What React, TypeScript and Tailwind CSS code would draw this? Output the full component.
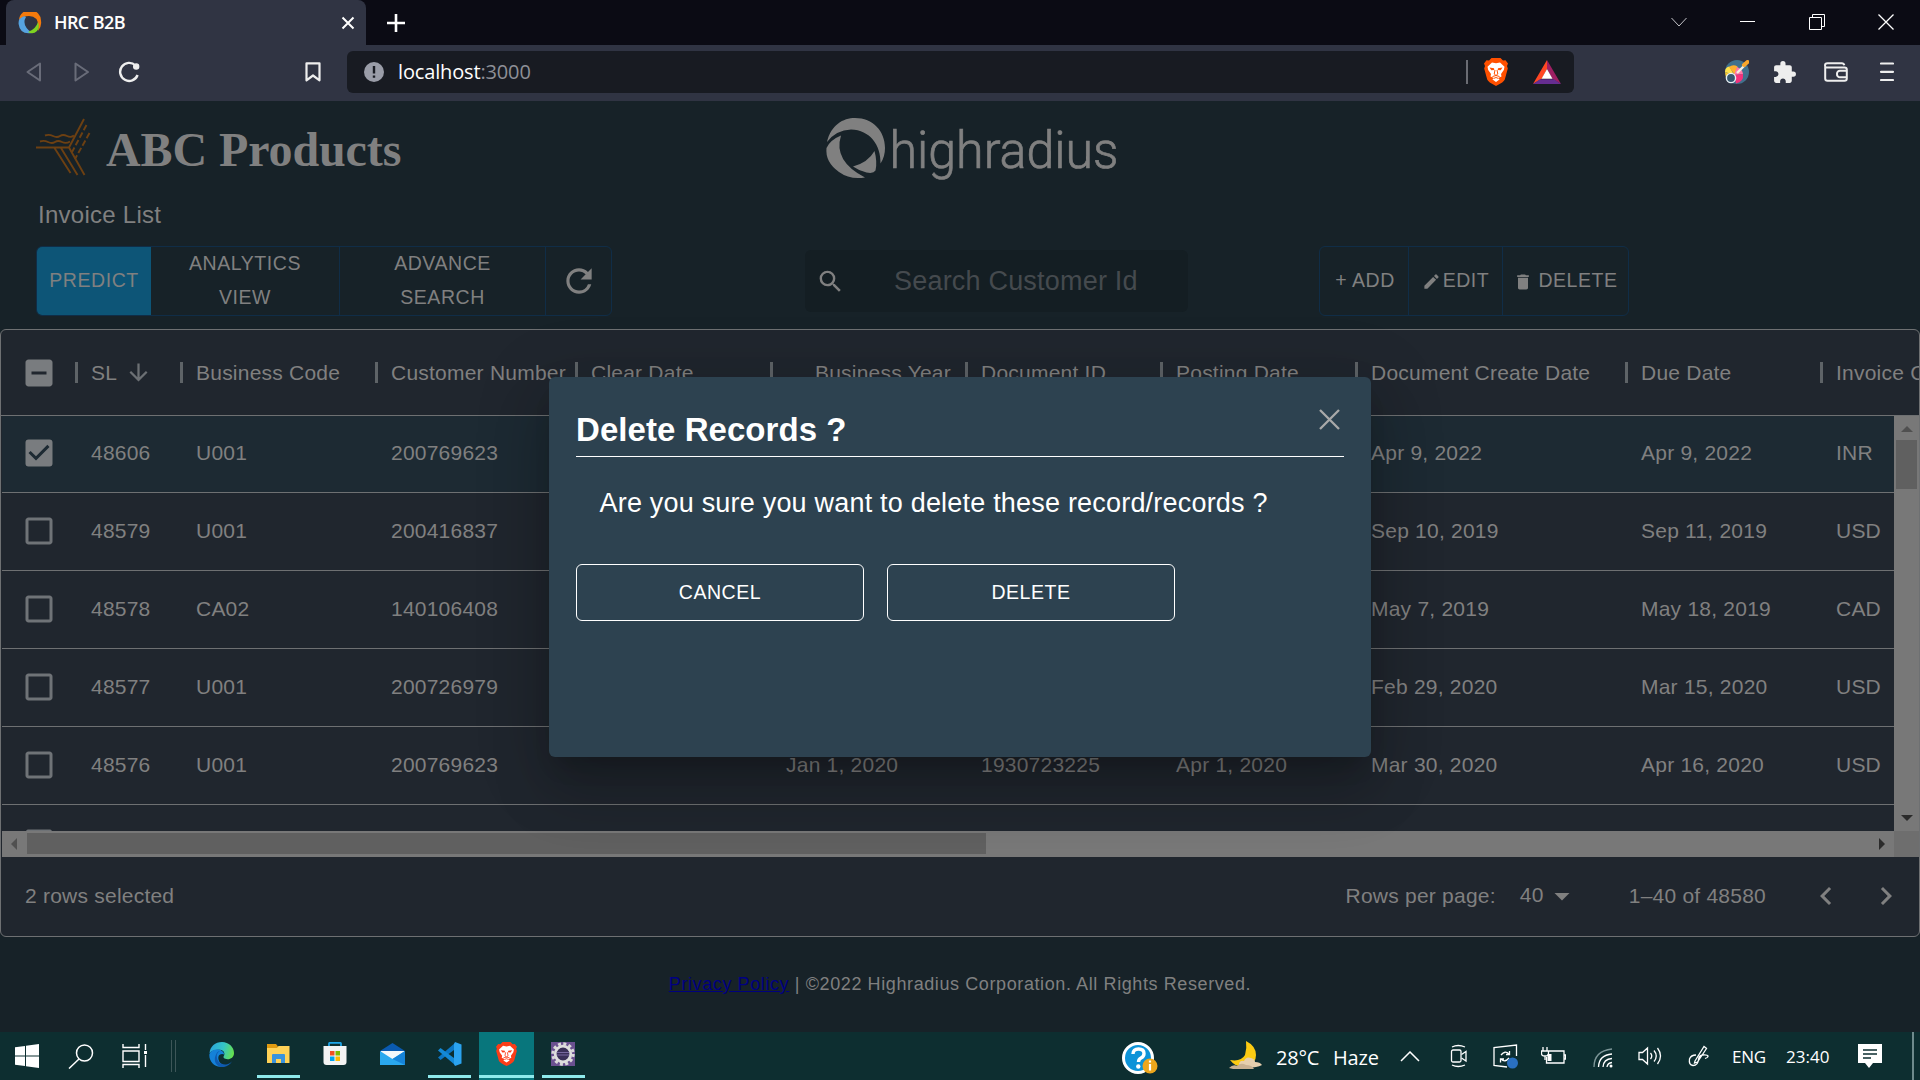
import React from "react";
import {
  MdArrowDownward,
  MdArrowDropDown,
  MdCheckBox,
  MdCheckBoxOutlineBlank,
  MdDelete,
  MdEdit,
  MdExtension,
  MdIndeterminateCheckBox,
  MdKeyboardArrowLeft,
  MdKeyboardArrowRight,
  MdRefresh,
  MdSearch,
} from "react-icons/md";

/* ---------- Browser chrome ---------- */

function BraveMark({ className, color = "#ff5000" }: { className: string; color?: string }) {
  return (
    <svg viewBox="0 0 24 28" preserveAspectRatio="none" className={className}>
      <path d="M7.500 0h9L19 2.500l2.500-.3L24 5.500 23 8l.8 2.500-3 11Q20 24 12 28 4 24 3.200 21.500L.2 10.500 1 8 0 5.500l2.500-3.300 2.500.3z" fill={color} />
      <path
        d="M8 4.500l4 .8 4-.8 4.500 4.200-.7 3.300-2.800 4 .5 2.500-3 1.200 1 1.800L12 24l-3.500-2.500 1-1.800-3-1.200.5-2.500-2.800-4-.7-3.300z"
        fill="#fff"
      />
      <path d="M5.500 9.500l4.500.8.3 1.700-3 .3zM18.500 9.500l-4.500.8-.3 1.700 3 .3z" fill={color} />
      <path d="M11 12l-.8 4L12 17.500l1.800-1.500-.8-4M8.500 18.500L12 17.500l3.500 1M9.500 20.500l2.500-1 2.500 1" fill="none" stroke={color} strokeWidth="1" />
    </svg>
  );
}

function TabStrip() {
  return (
    <div className="flex h-[45px] shrink-0 bg-[#0b0b14] pl-[6px] text-white">
      <div className="flex w-[360px] items-center rounded-t-lg bg-[#303443] pl-3 pr-[11px]">
        <svg width="24" height="22" viewBox="0 0 24 22">
          <path d="M1 8A11 10.500 0 0 1 23 9q1 5-3 10Q22 4 11 4 5 4 1 8z" fill="#f47a0c" />
          <path d="M1.500 7Q6 3 8 5 3 13 14 21 2 23 .6 12q-.2-3 .9-5z" fill="#56a3e0" />
          <path d="M20 10q2 6-1 9-4 4-9 1 8-3 10-10z" fill="#7ed321" />
        </svg>
        <span className="ml-3 font-['Open_Sans'] text-[18px] font-semibold tracking-[-0.6px]">HRC B2B</span>
        <svg className="ml-auto" width="14" height="14" viewBox="0 0 14 14" stroke="#fff" strokeWidth="2">
          <path d="M1.500 1.500l11 11M12.500 1.500l-11 11" />
        </svg>
      </div>
      <svg className="ml-5 mt-[13px]" width="20" height="20" viewBox="0 0 20 20" stroke="#fff" strokeWidth="2.600">
        <path d="M10 1v18M1 10h18" />
      </svg>
      <div className="ml-auto flex h-[43px] items-center">
        <div className="flex w-[69px] justify-center">
          <svg width="16" height="10" viewBox="0 0 16 10" fill="none" stroke="#c4c4c8" strokeWidth="1">
            <path d="M.5 1L8 9l7.500-8" />
          </svg>
        </div>
        <div className="flex w-[69px] justify-center">
          <div className="h-px w-[15px] bg-white" />
        </div>
        <div className="flex w-[69px] justify-center">
          <svg width="16" height="16" viewBox="0 0 16 16" fill="none" stroke="#fff">
            <path d="M.5 3.500h12v12H.5zM3.500 3.500v-3h12v12h-3" />
          </svg>
        </div>
        <div className="flex w-[69px] justify-center">
          <svg width="16" height="16" viewBox="0 0 16 16" stroke="#fff" strokeWidth="1.300">
            <path d="M.5.5l15 15M15.500.5l-15 15" />
          </svg>
        </div>
      </div>
    </div>
  );
}

function AddressBar() {
  return (
    <div className="flex h-14 shrink-0 items-center bg-[#303443] pb-[2px] pl-[26px] font-['Open_Sans']">
      <svg width="16" height="20" viewBox="0 0 16 20" fill="none" stroke="#696c79" strokeWidth="2" strokeLinejoin="round">
        <path d="M14 1.500v17L1.500 10z" />
      </svg>
      <svg className="ml-8" width="16" height="20" viewBox="0 0 16 20" fill="none" stroke="#696c79" strokeWidth="2" strokeLinejoin="round">
        <path d="M1.500 1.500v17L14 10z" />
      </svg>
      <svg className="ml-[28px]" width="22" height="22" viewBox="0 0 22 22" fill="none" stroke="#eee" strokeWidth="2.400">
        <path d="M19.600 14A9 9 0 1 1 17.500 4.500" />
        <circle cx="18.200" cy="5.500" r="2.600" fill="#eee" strokeWidth="1.200" />
      </svg>
      <svg className="ml-[165px]" width="16" height="20" viewBox="0 0 16 20" fill="none" stroke="#eee" strokeWidth="2.200" strokeLinejoin="round">
        <path d="M1.500 1.300h13v17L8 13.500l-6.500 4.800z" />
      </svg>
      <div className="ml-[26px] flex h-[42px] w-[1227px] items-center rounded-md bg-[#181b22] pl-[17px] pr-[13px]">
        <svg width="20" height="20" viewBox="0 0 20 20">
          <circle cx="10" cy="10" r="10" fill="#9a9da8" />
          <path d="M10 4v7.500M10 13.500v2.300" stroke="#181b22" strokeWidth="2.400" />
        </svg>
        <span className="ml-[14px] text-[20px] leading-6 tracking-[-0.15px] text-white">
          localhost<span className="text-[#8e9097]">:3000</span>
        </span>
        <div className="ml-auto h-6 w-[2px] bg-[#6a6c73]" />
        <BraveMark className="ml-4 h-7 w-6" />
        <svg className="ml-[25px]" width="28" height="24" viewBox="0 0 28 24">
          <path d="M14 0v9L9 18.500 0 24z" fill="#ff4724" />
          <path d="M14 0v9l5 9.500 9 5.500z" fill="#9e1f63" />
          <path d="M0 24l7-4.700h14l7 4.700z" fill="#662d91" />
          <path d="M14 9l5.500 9.800h-11z" fill="#fff" />
        </svg>
      </div>
      <svg className="ml-[151px]" width="24" height="24" viewBox="0 0 24 24">
        <circle cx="12" cy="12" r="12" fill="#41718d" />
        <path d="M0 12Q0 7 4.500 6.500L9 15z" fill="#ffe14a" />
        <path d="M4 7q4-3 8.500-.5L10 15z" fill="#ffb02e" />
        <path d="M12 7q5.500 2 6 7l-9 1z" fill="#ff7aa8" />
        <path d="M18 14q1 8-7 9.500L9 15z" fill="#f5327c" />
        <path d="M0 12l1 6 6-3z" fill="#ffc928" />
        <circle cx="6" cy="18" r="4.600" fill="#35566e" stroke="#e8f1f5" strokeWidth="1.400" />
        <path d="M12 13L20 5" stroke="#f2efe6" strokeWidth="2.400" />
        <path d="M19 5L22.500 2" stroke="#f9a72b" strokeWidth="4" strokeLinecap="round" />
      </svg>
      <MdExtension className="ml-[23px]" size={25} color="#eee" />
      <svg className="ml-[27px]" width="24" height="20" viewBox="0 0 24 20" fill="none" stroke="#eee" strokeWidth="2" strokeLinejoin="round">
        <path d="M1.200 4v12.500q0 2.300 2.300 2.300h17q2.300 0 2.300-2.300V7.500q0-2-2.300-2H2q-1-.5-1-2Q1 1.200 3.500 1.200h14.300q2 0 2.500 2" />
        <path d="M23 8.700h-7a3 3 0 0 0-3 3.300 3 3 0 0 0 3 3.300h7" />
      </svg>
      <svg className="ml-8" width="14" height="20" viewBox="0 0 14 20" stroke="#eee" strokeWidth="2.200" strokeLinecap="round">
        <path d="M1 1.500h12M1 9.800h12M1 18h12" />
      </svg>
    </div>
  );
}

/* ---------- Page header and actions ---------- */

function AbcLogo() {
  return (
    <svg width="56" height="58" viewBox="0 0 56 58" fill="none" stroke="#6d4012" strokeWidth="1.900">
      <path d="M48 1L33 29.500M0 29.500h33L48.500 57M18.500 30l16 25M25 30l16.500 27" />
      <path d="M9 17.500q4-1.500 8 .5t7 0 7 0 7-.5M4 23.500q4-1.500 8 .5t7 0 7 0 8-.5" />
      <path d="M50.500 7L36 34M53.500 15L39 41" strokeDasharray="6 2.500" />
    </svg>
  );
}

function HighRadiusLogo() {
  return (
    <svg width="310" height="76" viewBox="0 0 310 76" fill="#808080" className="overflow-visible">
      <path d="M1 24C5 7 17 0 29 0c18 0 30 13 30 30q0 9-4.500 15.500C55 27 44 12 25 11.500Q10 12 1 24z" />
      <path d="M15 17.500Q7 43 39 59.500 24 62 13 54-1 44 .5 30 4 22 15 17.500z" />
      <path d="M48.500 33q3 11 1 19.500-2 3.500-9 2-7-1.500-13.500-6 15-4 21.500-15.500z" />
      <text
        x="63.500"
        y="49.500"
        fontFamily="Roboto, sans-serif"
        fontWeight="300"
        fontSize="52"
        textLength="229"
        lengthAdjust="spacingAndGlyphs"
        stroke="#808080"
        strokeWidth="0.700"
      >
        highradius
      </text>
    </svg>
  );
}

const groupBox =
  "flex h-[70px] overflow-hidden rounded-md border border-[#102d47] text-center text-[19.5px] leading-[34px] tracking-[0.557px]";

function PageHeader() {
  return (
    <>
      <div className="flex h-24 items-start pl-9 pt-[17px]">
        <AbcLogo />
        <h1 className="ml-[14px] mt-[4px] w-[720px] font-['Liberation_Serif'] text-[48px] font-bold leading-[56px] tracking-[-0.1px]">
          ABC Products
        </h1>
        <HighRadiusLogo />
      </div>
      <div className="pl-[38px] text-[24px] leading-9 tracking-[0.26px]">Invoice List</div>
      <div className="mt-[13px] flex h-[70px] items-center pl-9">
        <div className={groupBox + " w-[576px]"}>
          <div className="flex w-[114px] items-center justify-center bg-[#0d5577] pb-[2px]">PREDICT</div>
          <div className="-mt-px w-[189px] border-r border-[#102d47] px-8">ANALYTICS VIEW</div>
          <div className="-mt-px w-[206px] border-r border-[#102d47] px-8">ADVANCE SEARCH</div>
          <div className="flex flex-1 items-center justify-center">
            <MdRefresh size={38} />
          </div>
        </div>
        <div className="ml-[193px] flex h-[62px] w-[383px] items-center rounded-md bg-[#141e23] pl-[11px]">
          <MdSearch size={29} />
          <span className="ml-[49px] text-[27px] tracking-[0.2px] text-[#454a4e]">Search Customer Id</span>
        </div>
        <div className={groupBox + " ml-[131px] w-[310px] items-stretch"}>
          <div className="flex w-[89px] items-center justify-center border-r border-[#102d47] pb-[2px] pl-[2px]">+ ADD</div>
          <div className="flex w-[94px] items-center justify-center border-r border-[#102d47] pb-[2px]">
            <MdEdit size={19} className="mr-[2px] mt-[3px]" />
            EDIT
          </div>
          <div className="flex flex-1 items-center justify-center pb-[2px]">
            <MdDelete size={20} className="mr-[5px] mt-[3px]" />
            DELETE
          </div>
        </div>
      </div>
    </>
  );
}

/* ---------- Invoice grid ---------- */

type Column = { label: string; cell: string; right?: boolean; sorted?: boolean };

const columns: Column[] = [
  { label: "SL", cell: "w-[105px]", sorted: true },
  { label: "Business Code", cell: "w-[195px]" },
  { label: "Customer Number", cell: "w-[199px]" },
  { label: "Clear Date", cell: "w-[195px]" },
  { label: "Business Year", cell: "w-[195px]", right: true },
  { label: "Document ID", cell: "w-[195px]" },
  { label: "Posting Date", cell: "w-[195px]" },
  { label: "Document Create Date", cell: "w-[270px]" },
  { label: "Due Date", cell: "w-[195px]" },
  { label: "Invoice C", cell: "w-[100px]" },
];

const rows = [
  ["48606", "U001", "200769623", "", "", "", "", "Apr 9, 2022", "Apr 9, 2022", "INR"],
  ["48579", "U001", "200416837", "", "", "", "", "Sep 10, 2019", "Sep 11, 2019", "USD"],
  ["48578", "CA02", "140106408", "", "", "", "", "May 7, 2019", "May 18, 2019", "CAD"],
  ["48577", "U001", "200726979", "", "", "", "", "Feb 29, 2020", "Mar 15, 2020", "USD"],
  ["48576", "U001", "200769623", "", "Jan 1, 2020", "1930723225", "Apr 1, 2020", "Mar 30, 2020", "Apr 16, 2020", "USD"],
];

function GridHeader() {
  return (
    <div className="flex h-[86px] shrink-0 items-center overflow-hidden border-b border-[#6e7072]">
      <div className="flex w-[75px] shrink-0 justify-center pl-px">
        <MdIndeterminateCheckBox size={36} color="#797c7f" />
      </div>
      {columns.map((c, i) => (
        <div key={c.label} className={c.cell + " flex shrink-0 items-center whitespace-nowrap"}>
          <span className={"mb-px h-[21px] w-[3px] shrink-0 bg-[#5e6367] " + (i < 3 ? "-ml-px" : "")} />
          <span className={c.right ? "w-[178px] text-right" : "pl-[13px]"}>{c.label}</span>
          {c.sorted && <MdArrowDownward size={27} color="#6c7074" className="ml-[8px]" />}
        </div>
      ))}
    </div>
  );
}

function InvoiceGrid() {
  return (
    <div className="mt-[13px] flex h-[608px] flex-col overflow-hidden rounded-md border border-[#6e7072] bg-[#20262e] text-[21px] tracking-[0.225px]">
      <GridHeader />
      <div className="flex h-[415px] shrink-0 pl-px">
        <div className="flex w-[1892px] flex-col overflow-hidden">
          {rows.map((r, i) => (
            <div
              key={r[0]}
              className={
                "flex shrink-0 items-center border-b border-[#6e7072] " + (i === 0 ? "h-[77px] bg-[#1d2a33] pb-px" : "h-[78px]")
              }
            >
              <div className="flex w-[89px] shrink-0 pb-px pl-[19px] text-[#6f7377]">
                {i === 0 ? <MdCheckBox size={36} color="#797c7f" /> : <MdCheckBoxOutlineBlank size={36} />}
              </div>
              {r.map((v, j) => (
                <div key={j} className={columns[j].cell + " shrink-0 whitespace-nowrap pb-px " + (j < 3 ? "" : "pl-px")}>
                  {v}
                </div>
              ))}
            </div>
          ))}
          <div className="h-[78px] shrink-0 pl-[19px] pt-[20px] text-[#6f7377]">
            <MdCheckBoxOutlineBlank size={36} />
          </div>
        </div>
        <div className="flex flex-1 flex-col items-center bg-[#787878] pb-[13px] pt-[10px]">
          <svg width="12" height="6" viewBox="0 0 12 6" fill="#505050">
            <path d="M6 0l6 6H0z" />
          </svg>
          <div className="mt-[8px] h-[49px] w-[21px] bg-[#606060]" />
          <svg className="-mb-[3px] mt-auto" width="12" height="6" viewBox="0 0 12 6" fill="#2b2b2b">
            <path d="M6 6L0 0h12z" />
          </svg>
        </div>
      </div>
      <div className="flex h-[26px] shrink-0 pl-px">
        <div className="flex w-[1892px] items-center bg-[#787878] pb-px pl-[9px] pr-[9px]">
          <svg width="6" height="12" viewBox="0 0 6 12" fill="#505050">
            <path d="M0 6l6-6v12z" />
          </svg>
          <div className="ml-[10px] h-[21px] w-[959px] bg-[#606060]" />
          <svg className="ml-auto" width="6" height="12" viewBox="0 0 6 12" fill="#2b2b2b">
            <path d="M6 6L0 0v12z" />
          </svg>
        </div>
        <div className="flex-1 bg-[#6e6e6e]" />
      </div>
      <div className="flex flex-1 items-center pb-[2px] pl-6 pr-[15px]">
        <span>2 rows selected</span>
        <span className="ml-auto">Rows per page:</span>
        <span className="mb-[2px] ml-[24px] w-[24px]">40</span>
        <MdArrowDropDown size={36} />
        <span className="ml-[49px]">1–40 of 48580</span>
        <MdKeyboardArrowLeft size={36} className="ml-[42px]" />
        <MdKeyboardArrowRight size={36} className="ml-[24px]" />
      </div>
    </div>
  );
}

/* ---------- Delete dialog ---------- */

function DeleteDialog() {
  return (
    <div className="absolute left-[549px] top-[377px] h-[380px] w-[822px] rounded-md bg-[#2d4250] px-[27px] font-['Liberation_Sans'] text-white shadow-[0_16px_22px_-10px_rgba(0,0,0,0.2),0_36px_57px_4px_rgba(0,0,0,0.14),0_13px_69px_12px_rgba(0,0,0,0.12)]">
      <div className="flex h-20 items-start justify-between border-b border-white pt-[34px]">
        <h2 className="text-[33px] font-bold leading-[38px] tracking-[0.06px]">Delete Records ?</h2>
        <svg className="mr-1 mt-[-2px]" width="21" height="21" viewBox="0 0 21 21" stroke="#a9a9a9" strokeWidth="2.300">
          <path d="M1 1l19 19M20 1L1 20" />
        </svg>
      </div>
      <p className="pl-[23.5px] pt-[28px] text-[27px] leading-9 tracking-[0.2px]">Are you sure you want to delete these record/records ?</p>
      <div className="mt-[43px] flex gap-[23px] text-[19.5px] tracking-[0.557px]">
        <button className="h-[57px] w-[288px] rounded-md border border-white">CANCEL</button>
        <button className="h-[57px] w-[288px] rounded-md border border-white">DELETE</button>
      </div>
    </div>
  );
}

/* ---------- Windows taskbar ---------- */

function AppSlot({ children, state = "idle" }: { children: React.ReactNode; state?: "idle" | "open" | "active" }) {
  return (
    <div
      className={
        "flex h-12 flex-col items-center pb-[2px] " + (state === "active" ? "mx-px w-[55px] bg-[#08767c]" : "w-[57px]")
      }
    >
      <div className="flex flex-1 items-center pr-px pt-px">{children}</div>
      <div className={state === "idle" ? "h-[3px]" : state === "active" ? "h-[3px] w-[55px] bg-[#8eeaec]" : "h-[3px] w-[43px] bg-[#8eeaec]"} />
    </div>
  );
}

function PinnedApps() {
  return (
    <>
      <AppSlot>
        <svg width="25" height="25" viewBox="0 0 24 24">
          <defs>
            <linearGradient id="edgeTop" x1="0" y1="0.300" x2="1" y2="0.500">
              <stop offset="0" stopColor="#2aa4dc" />
              <stop offset="0.550" stopColor="#35c5c5" />
              <stop offset="1" stopColor="#66e04e" />
            </linearGradient>
          </defs>
          <path d="M.5 11C1 4 6 0 12.500 0 19 0 24 5 24 10.500c0 4-3 6-6 6-3.500 0-5-1.500-3.500-3.500 1-2.500-.5-5-4-5.500C6 7 2.500 8 .5 11z" fill="url(#edgeTop)" />
          <path d="M.3 12C1.500 8.500 5 6.800 9 7.300c3 .4 5.500 2.500 5.500 4.700-1-.7-3-.7-4.500.5-2 2-1.500 8 5 10.500-8 3-15-3-14.700-11z" fill="#1481d8" />
          <path d="M7.500 14c0 5 4 8 9 7.500 2.500-.4 4.500-1.500 6-3.500C20 22.500 16 24.500 12 24 7 23.500 3.500 18 7 11.500c.7-1.500 2-2.500 3.500-2.800C8 10 7.500 12 7.500 14z" fill="#0f5bb0" />
        </svg>
      </AppSlot>
      <AppSlot state="open">
        <svg width="23" height="20" viewBox="0 0 23 20">
          <path d="M0 0h9l2 2.500v2H0z" fill="#e09a10" />
          <path d="M0 4h10l1.500-2H22.500v17H0z" fill="#ffd257" />
          <path d="M5 19v-8q0-1 1-1h11q1 0 1 1v8h-4v-4H9v4z" fill="#3a93dd" />
        </svg>
      </AppSlot>
      <AppSlot>
        <svg width="24" height="24" viewBox="0 0 24 24">
          <path d="M6 5V1.500Q6 .8 7 .8h10q1 0 1 .7V5" fill="none" stroke="#1ea7ea" strokeWidth="1.700" />
          <path d="M.5 4h23v16q0 3-3 3h-17q-3 0-3-3z" fill="#f3f3f3" />
          <path d="M7 9h4.500v4.500H7z" fill="#f25022" />
          <path d="M12.500 9H17v4.500h-4.500z" fill="#7fba00" />
          <path d="M7 14.500h4.500V19H7z" fill="#00a4ef" />
          <path d="M12.500 14.500H17V19h-4.500z" fill="#ffb900" />
        </svg>
      </AppSlot>
      <AppSlot>
        <svg width="25" height="22" viewBox="0 0 25 22">
          <path d="M0 8L12.500 0 25 8v2H0z" fill="#0a5ab0" />
          <path d="M1 8h23v8H1z" fill="#f4f7fa" />
          <path d="M0 8l12.500 8L25 8v14H0z" fill="#2aa8ee" />
          <path d="M25 8v14L12.500 16z" fill="#1683d8" />
        </svg>
      </AppSlot>
      <AppSlot state="open">
        <svg width="25" height="24" viewBox="0 0 25 24">
          <path d="M18 1L1 15.500 3.500 18 19 6.500z" fill="#0b76c4" />
          <path d="M18 23L1 8.500 3.500 6 19 17.500z" fill="#1489d6" />
          <path d="M18 0l6.500 2.500v19L18 24l-1-2V2z" fill="#2ba3f0" />
        </svg>
      </AppSlot>
      <AppSlot state="active">
        <BraveMark className="h-6 w-[21px]" color="#fb3d18" />
      </AppSlot>
      <AppSlot state="open">
        <svg width="24" height="24" viewBox="0 0 24 24">
          <path d="M0 0h24v24H0z" fill="#6a5090" />
          <circle cx="12" cy="12" r="10.200" fill="none" stroke="#d9d9d9" strokeWidth="3" strokeDasharray="3 2.340" />
          <circle cx="12" cy="12" r="7.800" fill="#3a2f58" stroke="#dedede" strokeWidth="2.800" />
          <path d="M6 10.500h12M6 13h12" stroke="#7868a0" strokeWidth="1.200" />
        </svg>
      </AppSlot>
    </>
  );
}

function SystemTray() {
  return (
    <div className="ml-auto flex items-center font-['Open_Sans'] text-white">
      <svg className="mt-[4px]" width="36" height="33" viewBox="0 0 36 33">
        <circle cx="16" cy="16" r="14.500" fill="#0d93d8" stroke="#fff" strokeWidth="3" />
        <path d="M11 12q0-5 5.500-5t5.500 4.500q0 3-3 4.500-2.500 1.300-2.500 4" fill="none" stroke="#fff" strokeWidth="3.400" />
        <circle cx="16.300" cy="24.500" r="2.200" fill="#fff" />
        <circle cx="28" cy="24" r="7.500" fill="#eda61c" />
        <path d="M28 22v6.500M28 18.500v2" stroke="#fff" strokeWidth="2.200" />
      </svg>
      <svg className="ml-[71px]" width="34" height="30" viewBox="0 0 34 30">
        <path d="M17 0q10 5 10 14t-9 11Q8 28 1 19q11 2 15-5 2-7 1-14z" fill="#fccb12" />
        <path d="M10 23q1-4 5-3 2-5 7-3 4 1 4 4 5 0 7 3-8 4-22 2z" fill="#e6cfae" />
        <path d="M0 27q4-4 8-2 4-4 9-1 6 0 8 4H4z" fill="#c9b192" />
      </svg>
      <span className="ml-[13px] mt-[3px] w-[57px] text-[20px] tracking-[-0.2px]">28°C</span>
      <span className="mt-[3px] w-[67px] text-[20px] tracking-[-0.2px]">Haze</span>
      <svg width="20" height="11" viewBox="0 0 20 11" fill="none" stroke="#fff" strokeWidth="1.500">
        <path d="M1 10l9-9 9 9" />
      </svg>
      <svg className="ml-[30px]" width="18" height="24" viewBox="0 0 18 24" fill="none" stroke="#fff" strokeWidth="1.300">
        <rect x="1.500" y="6" width="9.500" height="12" rx="1.500" />
        <path d="M11.500 10.500L16 7.500v9.500l-4.500-3M2 3q6-3 13 0M2 21q6 3 13 0" />
      </svg>
      <svg className="ml-[25px]" width="26" height="25" viewBox="0 0 26 25" fill="none" stroke="#fff" strokeWidth="1.300">
        <path d="M23.500 12V1L1 3.500v18L14 23" />
        <path d="M8 11q4-5 8-1M16.500 7v3.500H13M16 14q-4 5-8 1M7.500 18.500V15H11" />
        <circle cx="19.500" cy="19" r="5.500" fill="#2a70c0" stroke="none" />
      </svg>
      <svg className="ml-[22px]" width="25" height="20" viewBox="0 0 25 20" fill="none" stroke="#fff" strokeWidth="1.300">
        <path d="M8 5h15v12H5.500v-6M23 9h1.500v4H23" />
        <path d="M2 1v4M6 1v4M.5 5h7v2.500Q7.500 10 4 10T.5 7.500zM4 10v4" />
        <path d="M6.500 8h4v7h-4z" fill="#fff" stroke="none" />
      </svg>
      <svg className="ml-[27px] mt-[3px]" width="20" height="20" viewBox="0 0 20 20" fill="none" stroke="#fff" strokeWidth="1.300">
        <path d="M1 19Q1 3 19 1" stroke="#7d9698" />
        <path d="M5.500 19Q6 7 19 6M10 19q.5-8 9-8.500M14 19q.5-4 5-4.500" />
        <circle cx="18" cy="18" r="1.500" fill="#fff" stroke="none" />
      </svg>
      <svg className="ml-[25px]" width="24" height="20" viewBox="0 0 24 20" fill="none" stroke="#fff" strokeWidth="1.300">
        <path d="M1 6.500h3.500L9.500 2v16l-5-4.500H1zM12.500 7q2.500 3 0 6M16 4.500q4.500 5.500 0 11M19.500 2q6 8 0 16" />
      </svg>
      <svg className="ml-[26px]" width="22" height="22" viewBox="0 0 22 22" fill="none" stroke="#fff" strokeWidth="1.300">
        <path d="M7 16L16 1.500l2.500 2L9.500 17 6.500 18zM8 10q-5 0-6.500 4Q.5 20 5 20.500q5 0 5.500-6 .5-4 4-4.500 5-.5 5.500 1 .3 1.500-3 2.500" />
      </svg>
      <span className="ml-[22px] mt-px w-[54px] text-[17px] tracking-[-0.3px]">ENG</span>
      <span className="mt-px w-[72px] text-[17px] tracking-[0px]">23:40</span>
      <svg width="24" height="24" viewBox="0 0 24 24">
        <path d="M0 0h24v19h-9l-4 5-4-5H0z" fill="#fff" />
        <path d="M5 6h14M5 10h14M5 14h8" stroke="#0d2e30" strokeWidth="1.300" />
      </svg>
      <div className="ml-[30px] mr-[6px] h-12 w-[2px] bg-[#6e8a8c]" />
    </div>
  );
}

function Taskbar() {
  return (
    <div className="flex h-12 shrink-0 items-center bg-[#0d2e30]">
      <svg className="ml-[15px]" width="24" height="24" viewBox="0 0 24 24" fill="#fff">
        <path d="M0 3.300L10 2v9.500H0zM11 1.800L24 0v11.500H11zM0 12.500h10V22L0 20.700zM11 12.500h13V24l-13-1.800z" />
      </svg>
      <svg className="ml-[29px]" width="26" height="25" viewBox="0 0 26 25" fill="none" stroke="#fff" strokeWidth="1.500">
        <circle cx="16.500" cy="9" r="8" />
        <path d="M11 15L1 24.500" />
      </svg>
      <svg className="ml-[28px]" width="26" height="24" viewBox="0 0 26 24" fill="none" stroke="#fff" strokeWidth="1.400">
        <path d="M1 0v3.500h16V0M1 24v-3.500h16V24M1 7h16v10.500H1zM23.500 0v6M23.500 11v12" />
        <path d="M22 7h3v3h-3z" fill="#fff" stroke="none" />
      </svg>
      <div className="ml-[23px] mr-[17px] h-8 w-[5px] border-x border-[#3d5658]" />
      <PinnedApps />
      <SystemTray />
    </div>
  );
}

export default function App() {
  return (
    <div className="relative flex h-[1080px] w-[1920px] flex-col overflow-hidden bg-[#172228]">
      <TabStrip />
      <AddressBar />
      <main className="h-[931px] shrink-0 overflow-hidden font-['Liberation_Sans'] text-[#808080]">
        <PageHeader />
        <InvoiceGrid />
        <footer className="mt-[34px] text-center text-[18px] leading-[27px] tracking-[0.6px]">
          <a className="text-[#000080] underline">Privacy Policy</a> | ©2022 Highradius Corporation. All Rights Reserved.
        </footer>
      </main>
      <Taskbar />
      <DeleteDialog />
    </div>
  );
}
